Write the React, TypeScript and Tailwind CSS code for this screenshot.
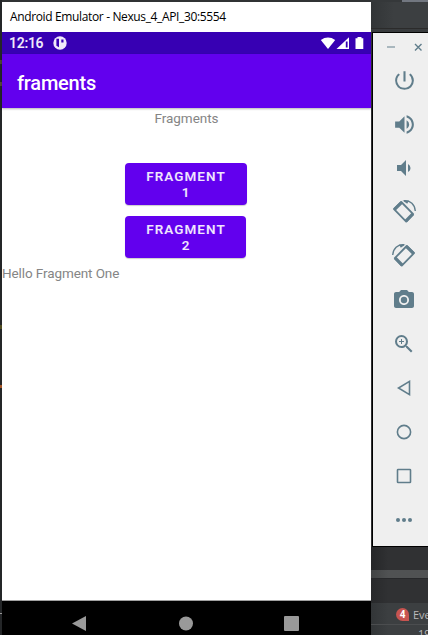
import type { ReactNode } from "react";
import { MdCameraAlt, MdPowerSettingsNew, MdVolumeDown, MdVolumeUp, MdZoomIn } from "react-icons/md";

function RotateIcon({ flip = false }: { flip?: boolean }) {
  return (
    <svg width="26" height="26" viewBox="0 0 26 26" fill="none" stroke="currentColor">
      <g transform={flip ? "translate(25 0) scale(-1 1)" : "translate(1 0)"}>
        <path d="M9.3 3 L21.2 15.2 L14.2 22.6 L2 10.2 Z" strokeWidth="1.8" strokeLinejoin="round" />
        <path d="M2.3 10.6 L9.7 3.4 M13.8 22.2 L20.9 14.8" strokeWidth="3.2" />
        <path d="M12 1.8 C18.5 1.2 22.8 5.5 23.3 12" strokeWidth="1.4" />
        <path d="M10.5 1.5 L17 1.6 L15.2 4.8 Z" fill="currentColor" stroke="none" />
      </g>
    </svg>
  );
}

const tools: { name: string; icon: ReactNode }[] = [
  { name: "Power", icon: <MdPowerSettingsNew size={25} /> },
  { name: "Volume up", icon: <MdVolumeUp size={25} /> },
  { name: "Volume down", icon: <MdVolumeDown size={24} /> },
  { name: "Rotate left", icon: <RotateIcon /> },
  { name: "Rotate right", icon: <RotateIcon flip /> },
  { name: "Screenshot", icon: <MdCameraAlt size={24} /> },
  { name: "Zoom", icon: <MdZoomIn size={24} /> },
  {
    name: "Back",
    icon: (
      <svg width="24" height="24" fill="none" stroke="currentColor" strokeWidth="1.6">
        <path d="M17.5 5.3 V18.7 L6.5 12 Z" />
      </svg>
    ),
  },
  {
    name: "Home",
    icon: (
      <svg width="24" height="24" fill="none" stroke="currentColor" strokeWidth="1.6">
        <circle cx="12" cy="12" r="6.6" />
      </svg>
    ),
  },
  {
    name: "Overview",
    icon: (
      <svg width="24" height="24" fill="none" stroke="currentColor" strokeWidth="1.6">
        <rect x="5.5" y="5.5" width="13" height="13" rx="0.6" />
      </svg>
    ),
  },
  {
    name: "More",
    icon: (
      <svg width="24" height="24" fill="currentColor">
        <circle cx="6" cy="12" r="2" />
        <circle cx="12" cy="12" r="2" />
        <circle cx="18" cy="12" r="2" />
      </svg>
    ),
  },
];

function FragmentButton({ number, className }: { number: number; className: string }) {
  return (
    <button
      className={`flex h-[42px] flex-col items-center justify-center rounded-[4px] bg-[#6200ee] pt-px text-[13.5px] leading-[15.5px] font-semibold text-white/90 shadow-[0_1px_1px_rgba(0,0,0,0.2)] ${className}`}
    >
      <span className="mr-[-1px] tracking-[1.05px]">FRAGMENT</span>
      <span>{number}</span>
    </button>
  );
}

function Device() {
  return (
    <main className="flex w-[369px] shrink-0 flex-col bg-white">
      <div className="flex h-[30px] shrink-0 items-center pl-2">
        <span className="font-['Open_Sans','Noto_Sans',sans-serif] text-[12px] tracking-[-0.36px] whitespace-nowrap text-black">
          Android Emulator - Nexus_4_API_30:5554
        </span>
      </div>
      <div className="flex h-[22px] shrink-0 items-center justify-between bg-[#3700b3] pr-[7px] pl-[7px] text-[#f0eafa]">
        <div className="flex items-center gap-[10px]">
          <span className="text-[14px] leading-[22px] font-semibold tracking-[-0.3px]">12:16</span>
          <svg width="14" height="14" viewBox="0 0 14 14">
            <circle cx="7" cy="7" r="6.7" fill="currentColor" />
            <path d="M3.4 2.8 H6 V11.2 L3.4 9.8 Z M8.3 3.5 H10.5 V6.4 H8.3 Z" fill="#3700b3" />
          </svg>
        </div>
        <svg width="44" height="14" viewBox="0 0 44 14" fill="#fff">
          <path d="M.8 4 Q8 -.8 15.2 4 L8 13 Z" />
          <path d="M29 1.2 V13 H16.5 Z" />
          <path d="M25.8 5.5 H27.6 V11.5 H25.8 Z" fill="#3700b3" />
          <path d="M37.5 1 H41.5 V2.2 H43.3 V13 H35.5 V2.2 H37.5 Z" />
        </svg>
      </div>
      <header className="flex h-[54px] shrink-0 items-center bg-[#6200ee] pt-[3px] pl-[15px] shadow-[0_1px_2px_rgba(0,0,0,0.3)]">
        <h1 className="text-[20px] leading-6 font-medium tracking-[-0.22px] text-white">framents</h1>
      </header>
      <section className="flex h-[492px] shrink-0 flex-col items-center text-[13.5px] leading-[18px] text-[#858585]">
        <p className="pt-px tracking-[-0.05px]">Fragments</p>
        <div className="mr-[2px] flex flex-col items-center gap-[11px] pt-9">
          <FragmentButton number={1} className="w-[122px]" />
          <FragmentButton number={2} className="w-[121px]" />
        </div>
        <p className="self-start pt-[6px] tracking-[-0.1px]">Hello Fragment One</p>
      </section>
      <nav className="flex h-[35px] shrink-0 border-t border-[#a0a0a0] bg-black pt-[13px] text-[#999]">
        <svg width="369" height="18" fill="currentColor">
          <path d="M84 2 V17 L70 9.5 Z" />
          <circle cx="184" cy="9.5" r="7" />
          <rect x="282" y="2" width="15" height="15" rx="1" />
        </svg>
      </nav>
    </main>
  );
}

function Toolbar() {
  return (
    <aside className="ml-px h-[515px] shrink-0 overflow-hidden border-y border-l border-black bg-[#efefef] text-[#607d8b]">
      <div className="flex h-[25px] w-[62px] items-center pt-[3px] pl-[14px]">
        <svg width="36" height="10" fill="none" stroke="currentColor">
          <path d="M0 5 H8" strokeWidth="1.5" opacity=".65" />
          <path d="M28 2 L34.5 8.5 M34.5 2 L28 8.5" strokeWidth="1.4" />
        </svg>
      </div>
      {tools.map((tool) => (
        <div key={tool.name} aria-label={tool.name} className="flex h-11 w-[62px] items-center justify-center">
          {tool.icon}
        </div>
      ))}
    </aside>
  );
}

export default function App() {
  return (
    <div className="flex h-[635px] w-[428px] overflow-hidden bg-[#303133] font-[Roboto,sans-serif]">
      <div className="flex w-[2px] shrink-0 flex-col bg-[#242628]">
        <div className="mt-[60px] h-1 bg-[#4c4930]" />
        <div className="mt-[18px] h-1 bg-[#554a36]" />
        <div className="mt-[239px] h-1 bg-[#4f4c21]" />
        <div className="mt-[56px] h-[3px] bg-[#a45426]" />
        <div className="mt-[225px] h-px bg-[#999]" />
      </div>
      <div className="flex shrink-0 flex-col">
        <div className="h-[2px] shrink-0 bg-[#303234]" />
        <Device />
      </div>
      <div className="flex w-[57px] shrink-0 flex-col overflow-hidden">
        <div className="flex h-[2px] shrink-0 justify-end bg-[#35383a]">
          <div className="w-[26px] bg-[#727780]" />
        </div>
        <div className="h-[26px] shrink-0 bg-linear-to-r from-[#323537] to-[#3c3f41] to-40%" />
        <div className="h-1 shrink-0 border-t border-[#2b2b2b] bg-[#393c3e]" />
        <Toolbar />
        <div className="h-[23px] shrink-0 bg-linear-to-r from-[#252628] to-[#303133] to-30%" />
        <div className="h-[8px] shrink-0 bg-linear-to-r from-[#414344] to-[#505253] to-30%" />
        <div className="h-[25px] shrink-0 border-t border-[#27282a] bg-linear-to-r from-[#28292b] to-[#303133] to-30%" />
        <div className="flex h-[21px] shrink-0 items-center bg-linear-to-r from-[#323537] to-[#3c3f41] to-30% pt-[2px] pl-[25px]">
          <span className="flex size-[13px] shrink-0 items-center justify-center rounded-full rounded-br-none bg-[#c75450] text-[10px] leading-none font-bold text-white">
            4
          </span>
          <span className="ml-[4px] font-['Open_Sans','Noto_Sans',sans-serif] text-[11px] leading-none whitespace-nowrap text-[#bbb]">Eve</span>
        </div>
        <div className="h-[11px] shrink-0 overflow-hidden border-t border-[#4b4d4f] bg-linear-to-r from-[#323537] to-[#3c3f41] to-30% pl-[47px] font-['Open_Sans','Noto_Sans',sans-serif] text-[11px] leading-[18px] text-[#bbb]">
          19
        </div>
      </div>
    </div>
  );
}
